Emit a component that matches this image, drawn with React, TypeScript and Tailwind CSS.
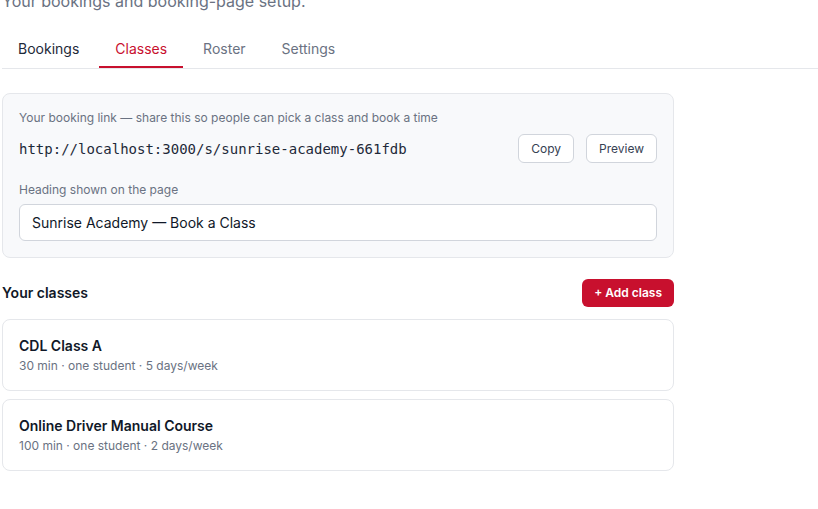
const tabs = [
  { label: "Bookings", tone: "text-gray-800 border-transparent" },
  { label: "Classes", tone: "text-[#c8102e] border-[#c8102e]" },
  { label: "Roster", tone: "text-gray-500 border-transparent" },
  { label: "Settings", tone: "text-gray-500 border-transparent" },
];

const classes = [
  { name: "CDL Class A", meta: "30 min · one student · 5 days/week" },
  { name: "Online Driver Manual Course", meta: "100 min · one student · 2 days/week" },
];

export default function App() {
  return (
    <main className="min-h-screen overflow-hidden bg-white pl-[2px] font-['Inter',sans-serif] text-gray-900">
      <p className="-mt-[11px] text-base leading-6 text-gray-500">
        Your bookings and booking-page setup.
      </p>

      <nav className="mt-[18px] flex gap-1 border-b border-gray-200">
        {tabs.map((tab) => (
          <button
            className={`border-b-2 px-4 pt-2 pb-[7px] text-sm leading-5 ${tab.tone}`}
            key={tab.label}
            type="button"
          >
            {tab.label}
          </button>
        ))}
      </nav>

      <div className="w-[672px]">
        <section className="mt-6 rounded-lg border border-gray-200 bg-[#f8f9fb] p-4">
          <p className="mb-2 text-xs leading-4 text-gray-500">
            Your booking link — share this so people can pick a class and book a time
          </p>
          <div className="flex items-center justify-between">
            <span className="font-['DejaVu_Sans_Mono',monospace] text-sm text-gray-800">
              http://localhost:3000/s/sunrise-academy-661fdb
            </span>
            <div className="flex gap-3">
              <button
                className="h-[29px] rounded-md border border-gray-300 bg-white px-3 text-xs text-gray-700"
                type="button"
              >
                Copy
              </button>
              <button
                className="h-[29px] rounded-md border border-gray-300 bg-white px-3 text-xs text-gray-700"
                type="button"
              >
                Preview
              </button>
            </div>
          </div>

          <label className="mt-[19px] block">
            <span className="mb-1.5 block text-xs leading-4 text-gray-500">
              Heading shown on the page
            </span>
            <input
              className="block h-[37px] w-full rounded-md border border-gray-300 bg-white px-3 text-sm text-gray-900 outline-none"
              defaultValue="Sunrise Academy — Book a Class"
              type="text"
            />
          </label>
        </section>

        <div className="mt-[21px] flex items-center justify-between">
          <h2 className="text-sm font-semibold text-gray-900">Your classes</h2>
          <button
            className="h-7 rounded-md bg-[#c8102e] px-3 text-xs font-semibold text-white"
            type="button"
          >
            + Add class
          </button>
        </div>

        <div className="mt-3 flex flex-col gap-2">
          {classes.map((item) => (
            <div
              className="rounded-lg border border-gray-200 bg-white p-4"
              key={item.name}
            >
              <p className="text-sm leading-5 font-semibold text-gray-900">{item.name}</p>
              <p className="mt-0.5 text-xs leading-4 text-gray-500">{item.meta}</p>
            </div>
          ))}
        </div>
      </div>
    </main>
  );
}
